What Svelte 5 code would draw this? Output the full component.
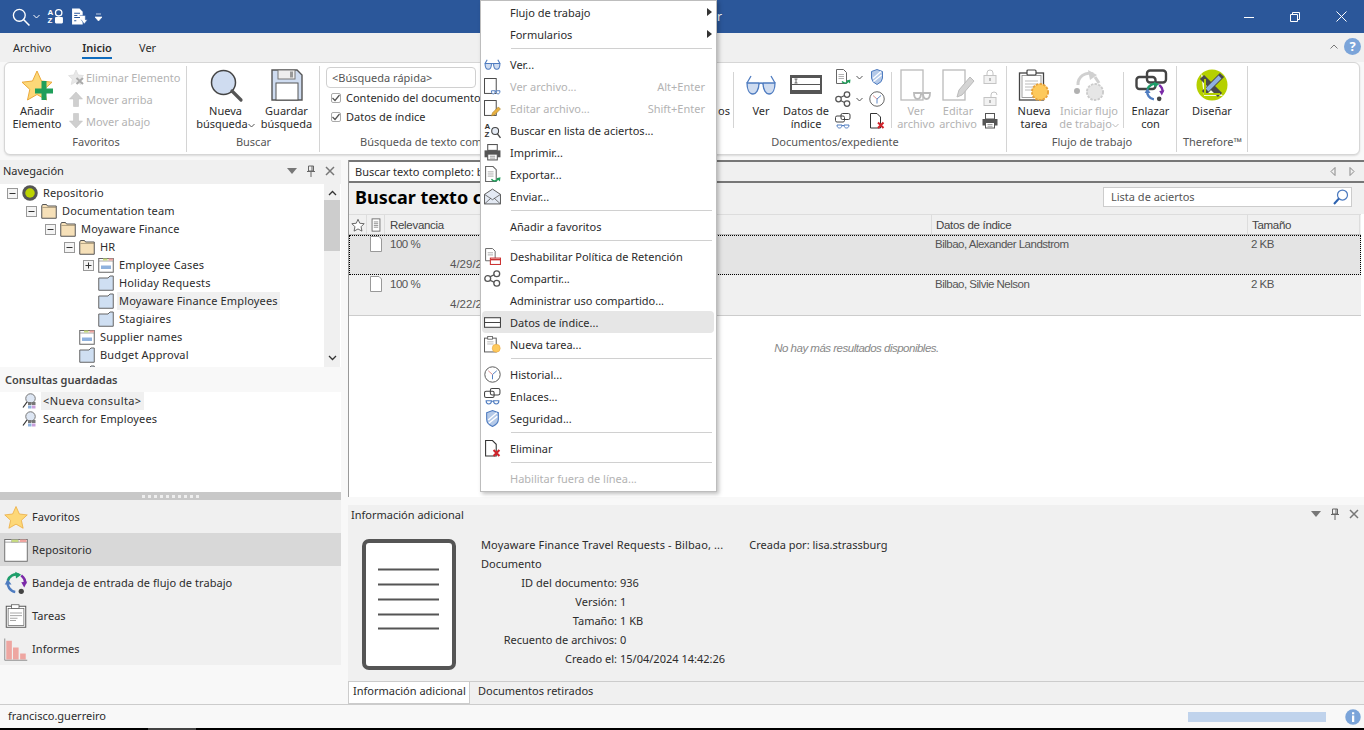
<script>
  // ── Data ───────────────────────────────────────────────────────────────────
  const tree = [
    { level: 0, exp: '-', icon: 'root', text: 'Repositorio' },
    { level: 1, exp: '-', icon: 'folder', text: 'Documentation team' },
    { level: 2, exp: '-', icon: 'folder', text: 'Moyaware Finance' },
    { level: 3, exp: '-', icon: 'folder', text: 'HR' },
    { level: 4, exp: '+', icon: 'category', text: 'Employee Cases' },
    { level: 4, icon: 'queue', text: 'Holiday Requests' },
    { level: 4, icon: 'queue', text: 'Moyaware Finance Employees', active: true },
    { level: 4, icon: 'queue', text: 'Stagiaires' },
    { level: 3, icon: 'category', text: 'Supplier names' },
    { level: 3, icon: 'queue', text: 'Budget Approval' },
    { level: 3, icon: 'queue', text: '' },
  ]

  const menu = [
    { label: 'Flujo de trabajo', arrow: true },
    { label: 'Formularios', arrow: true },
    { sep: true },
    { label: 'Ver...', icon: 'glasses' },
    { label: 'Ver archivo...', icon: 'fileView', off: true, key: 'Alt+Enter' },
    { label: 'Editar archivo...', icon: 'fileEdit', off: true, key: 'Shift+Enter' },
    { label: 'Buscar en lista de aciertos...', icon: 'azSearch' },
    { label: 'Imprimir...', icon: 'printer' },
    { label: 'Exportar...', icon: 'docExport' },
    { label: 'Enviar...', icon: 'mail' },
    { sep: true },
    { label: 'Añadir a favoritos' },
    { sep: true },
    { label: 'Deshabilitar Política de Retención', icon: 'retention' },
    { label: 'Compartir...', icon: 'share' },
    { label: 'Administrar uso compartido...' },
    { label: 'Datos de índice...', icon: 'indexSmall', hover: true },
    { label: 'Nueva tarea...', icon: 'taskSmall' },
    { sep: true },
    { label: 'Historial...', icon: 'clock' },
    { label: 'Enlaces...', icon: 'links' },
    { label: 'Seguridad...', icon: 'shield' },
    { sep: true },
    { label: 'Eliminar', icon: 'docX' },
    { sep: true },
    { label: 'Habilitar fuera de línea...', off: true },
  ]

  const navItems = [
    { label: 'Favoritos', icon: 'starPlain' },
    { label: 'Repositorio', icon: 'repo', active: true },
    { label: 'Bandeja de entrada de flujo de trabajo', icon: 'cycle' },
    { label: 'Tareas', icon: 'clipboard' },
    { label: 'Informes', icon: 'bars' },
  ]

  // the context menu hides the rest of these strings in the screenshot
  const hits = [
    { date: '4/29/2', data: 'Bilbao, Alexander Landstrom', size: '2 KB', selected: true },
    { date: '4/22/2', data: 'Bilbao, Silvie Nelson', size: '2 KB' },
  ]

  const infoRows = [
    ['ID del documento:', '936'],
    ['Versión:', '1'],
    ['Tamaño:', '1 KB'],
    ['Recuento de archivos:', '0'],
    ['Creado el:', '15/04/2024 14:42:26'],
  ]

  const BLUE = '#4f7cc0'
  const FILL = '#cfdcf0'
</script>

{#snippet lens(stroke, fill, w)}
  <path d="M2 14H14C14 21 11 25 8 25C4 25 2 20 2 14ZM18 14H30C30 20 28 25 24 25C21 25 18 21 18 14Z" fill={fill} stroke={stroke} stroke-width={w} />
  <path d="M14 15Q16 13 18 15M2 14L6 7M30 14L26 7" fill="none" stroke={stroke} stroke-width={w} />
{/snippet}

{#snippet smallLens(stroke)}
  <path d="M14 24H21C21 28 20 30 17.500 30S14 28 14 24ZM23 24H30C30 28 29 30 26.500 30S23 28 23 24Z" fill="#fff" stroke={stroke} stroke-width="1.800" />
  <path d="M21 25H23" stroke={stroke} stroke-width="1.800" />
{/snippet}

{#snippet sun(cx, cy, r, fill, stroke)}
  <circle {cx} {cy} r={r} {fill} stroke={stroke} stroke-width="2" stroke-dasharray="2.500 1.200" />
  <circle {cx} {cy} r={r - 1} {fill} />
{/snippet}

{#snippet arcs()}
  <path d="M5 13A12 12 0 0 1 20 5" fill="none" stroke="#1e9e6a" stroke-width="3.500" />
  <path d="M15 1L23 5L16 10Z" fill="#1e9e6a" />
  <path d="M23 6A12 12 0 0 1 28 17" fill="none" stroke="#7b2aa8" stroke-width="3.500" />
  <path d="M23 15L31 14L27 22Z" fill="#7b2aa8" />
  <path d="M5 14A12 12 0 0 0 15 28" fill="none" stroke={BLUE} stroke-width="3.500" />
  <path d="M1 18L5 11L10 18Z" fill={BLUE} />
  <circle cx="23" cy="27" r="3.500" fill="#444" />
{/snippet}

{#snippet ic(name, size = 16)}
  {@const sw = size < 20 ? 2 : 1.300}
  <svg class="ic" width={size} height={size} viewBox="0 0 32 32">
    {#if name === 'star' || name === 'starPlain'}
      <path d="M16 2L20.500 12L31 13.200L23.200 20.400L25.500 31L16 25.500L6.500 31L8.800 20.400L1 13.200L11.500 12Z" fill="#fdd878" stroke="#eba93c" stroke-width="1" />
      {#if name === 'star'}
        <path d="M21.500 13H26.500V20.500H33V25.500H26.500V32H21.500V25.500H15V20.500H21.500Z" fill="#1f9f5a" transform="translate(-1 -1)" />
      {/if}
    {:else if name === 'starOff'}
      <path d="M16 2L20.500 12L31 13.200L23.200 20.400L25.500 31L16 25.500L6.500 31L8.800 20.400L1 13.200L11.500 12Z" fill="#e8e8e8" stroke="#dcdcdc" stroke-width="1.500" />
      <path d="M17 18L30 30M30 18L17 30" stroke="#aaa" stroke-width="4" />
    {:else if name === 'up'}
      <path d="M16 2L29 16H21V31H11V16H3Z" fill="#cfcfcf" stroke="#bdbdbd" />
    {:else if name === 'down'}
      <path d="M16 30L29 16H21V1H11V16H3Z" fill="#cfcfcf" stroke="#bdbdbd" />
    {:else if name === 'lens'}
      <circle cx="13.500" cy="13.500" r="12" fill={FILL} stroke="#444" stroke-width="1.500" />
      <path d="M22 22L31 31" stroke="#555" stroke-width="3.200" stroke-linecap="round" />
    {:else if name === 'floppy'}
      <path d="M1 1H26L31 6V31H1Z" fill={FILL} stroke="#555" stroke-width="1.400" />
      <rect x="7" y="1" width="17" height="9" fill="#eee" stroke="#777" />
      <rect x="19" y="2.500" width="3" height="6" fill="#999" />
      <rect x="5" y="14" width="22" height="17" fill="#fff" stroke="#555" />
    {:else if name === 'glasses'}
      {@render lens(BLUE, FILL, size < 20 ? 2 : 1.300)}
    {:else if name === 'index'}
      <rect x="0" y="6" width="32" height="19" fill="#555" />
      <rect x="2" y="9" width="28" height="6" fill="#fff" />
      <rect x="2" y="16" width="28" height="5" fill="#fff" />
      <path d="M6 10V14M4.500 10H7.500M4.500 14H7.500" stroke="#444" stroke-width=".800" />
    {:else if name === 'indexSmall'}
      <rect x="1" y="7" width="30" height="18" fill="#fff" stroke="#444" stroke-width="2" />
      <path d="M1 16H31" stroke="#444" stroke-width="2" />
    {:else if name === 'docExport'}
      <path d="M3 1H17L23 7V29H3Z" fill="#fff" stroke="#666" stroke-width={sw} />
      <path d="M7 11H18M7 15H18M7 19H18" stroke="#999" stroke-width="1.500" />
      <path d="M14 25Q21 32 27 24" fill="none" stroke="#1f9f5a" stroke-width="3" />
      <path d="M23 23L31 21L30 29Z" fill="#1f9f5a" />
    {:else if name === 'share'}
      <g fill="#fff" stroke="#555" stroke-width="2.500">
        <path d="M9 14L21 8M9 18L21 24" />
        <circle cx="7" cy="16" r="5.500" />
        <circle cx="24" cy="7" r="5.500" />
        <circle cx="24" cy="25" r="5.500" />
      </g>
    {:else if name === 'links'}
      <g fill="none" stroke="#444" stroke-width="2">
        <rect x="1" y="6" width="18" height="12" rx="3" />
        <rect x="12" y="1" width="18" height="12" rx="3" />
      </g>
      <path d="M4 24H14C14 28 12 30 9 30S4 28 4 24ZM18 24H28C28 28 26 30 23 30S18 28 18 24ZM14 25H18" fill="none" stroke={BLUE} stroke-width="2" />
    {:else if name === 'shield'}
      <path d="M5 5L16 1L27 5V18Q27 26 16 31Q5 26 5 18Z" fill="#b4c9e8" stroke={BLUE} stroke-width="2" />
      <path d="M8 19L24 5M9 25L25 12" stroke="#fff" stroke-width="2.500" />
    {:else if name === 'clock'}
      <circle cx="16" cy="16" r="14.500" fill="#fff" stroke="#555" stroke-width="1.800" />
      <path d="M16 16V25M16 16L24 9" stroke={BLUE} stroke-width="1.800" />
      <path d="M16 16L8 9" stroke="#d88" stroke-width="1.800" />
    {:else if name === 'docX'}
      <path d="M3 1H16L23 8V30H3Z" fill="#fff" stroke="#333" stroke-width="2" />
      <path d="M18 19L29 30M29 19L18 30" stroke="#d0232a" stroke-width="4" />
    {:else if name === 'fileViewOff'}
      <rect x="1" y="1" width="22" height="30" fill="#fff" stroke="#bbb" stroke-width="1.300" />
      {@render smallLens('#bbb')}
    {:else if name === 'fileEditOff'}
      <rect x="1" y="1" width="22" height="30" fill="#fff" stroke="#bbb" stroke-width="1.300" />
      <path d="M15 28L17 21L28 8L32 12L20 26Z" fill="#d4d4d4" stroke="#bbb" />
    {:else if name === 'fileView'}
      <rect x="1" y="1" width="22" height="28" fill="#fff" stroke="#444" stroke-width="1.800" />
      {@render smallLens(BLUE)}
    {:else if name === 'fileEdit'}
      <rect x="1" y="1" width="22" height="28" fill="#fff" stroke="#444" stroke-width="1.800" />
      <path d="M14 30L16 24L27 13L31 17L20 28Z" fill="#e8b040" stroke="#a07820" />
    {:else if name === 'lockOff'}
      <rect x="4" y="13" width="24" height="16" fill="#f2f2f2" stroke="#c4c4c4" stroke-width="2" />
      <path d="M10 13V8Q10 2 16 2T22 8V13" fill="none" stroke="#c4c4c4" stroke-width="2" />
      <rect x="14" y="18" width="4" height="6" fill="#bbb" />
    {:else if name === 'unlockOff'}
      <rect x="4" y="13" width="24" height="16" fill="#f2f2f2" stroke="#c4c4c4" stroke-width="2" />
      <path d="M18 13V8Q18 2 24 2T30 8" fill="none" stroke="#c4c4c4" stroke-width="2" />
      <rect x="14" y="18" width="4" height="6" fill="#bbb" />
    {:else if name === 'printer'}
      <rect x="7" y="1" width="18" height="11" fill="#fff" stroke="#555" stroke-width="2" />
      <path d="M1 12H31V25H1Z" fill="#555" />
      <rect x="7" y="19" width="18" height="11" fill="#fff" stroke="#555" stroke-width="2" />
      <path d="M11 23H21M11 26.500H21" stroke="#777" stroke-width="1.400" />
    {:else if name === 'newTask'}
      <rect x="1.500" y="4" width="24" height="27" fill="#fff" stroke="#444" stroke-width="1.300" />
      <rect x="4" y="6.500" width="19" height="22" fill="#fff" stroke="#888" stroke-width=".800" />
      <rect x="9" y="1" width="9" height="5" rx="1" fill="#fff" stroke="#444" stroke-width="1.200" />
      <path d="M7 12H20M7 15H20M7 18H16M7 21H14" stroke="#bbb" stroke-width="1.200" />
      {@render sun(22, 23, 8, '#fdc95c', '#e8a23a')}
    {:else if name === 'taskSmall'}
      <rect x="1" y="4" width="22" height="26" fill="#fff" stroke="#555" stroke-width="1.800" />
      <rect x="7" y="1" width="9" height="5" fill="#fff" stroke="#555" stroke-width="1.500" />
      <path d="M6 11H18M6 15H18" stroke="#aaa" stroke-width="1.500" />
      <circle cx="23" cy="23" r="7.500" fill="#fdc95c" stroke="#e8a23a" />
    {:else if name === 'startOff'}
      <g opacity=".45">
        <path d="M5 16A11 11 0 0 1 20 5" fill="none" stroke="#999" stroke-width="3" />
        <path d="M15 1L24 6L17 11Z" fill="#999" />
        <path d="M22 8L26 14" stroke="#999" stroke-width="3" />
        <circle cx="4" cy="22" r="3" fill="#555" />
        <path d="M13 22L20 17V27Z" fill="#999" />
      </g>
      {@render sun(22, 23, 8, '#e6e6e6', '#ccc')}
    {:else if name === 'linkWith'}
      <g fill="none" stroke="#444" stroke-width="2.400">
        <rect x="1.500" y="8" width="19" height="12" rx="3" />
        <rect x="12" y="1.500" width="19" height="12" rx="3" />
      </g>
      <g transform="translate(9 12) scale(.66)">{@render arcs()}</g>
    {:else if name === 'design'}
      <circle cx="16" cy="16" r="15.500" fill="#b5d000" />
      <path d="M5 5L8 27H27L16 16Z" fill="#fff" opacity=".9" />
      <path d="M6 8L24 26M26 6L8 24" stroke="#4a4a4a" stroke-width="6" />
      <path d="M11 21L24 8" stroke="#8fb0e0" stroke-width="4" />
      <path d="M9 10V25H24" fill="none" stroke="#b5d000" stroke-width="2" />
    {:else if name === 'cycle'}
      {@render arcs()}
    {:else if name === 'repo'}
      <rect x="1" y="2" width="30" height="29" fill="#fff" stroke="#666" stroke-width="1.200" />
      <path d="M1 5.500H31" stroke="#888" />
      <rect x="10" y="2" width="9" height="3.500" fill="#c8dc80" stroke="#999" stroke-width=".500" />
      <rect x="21" y="2" width="9" height="3.500" fill="#efa5a0" />
    {:else if name === 'clipboard'}
      <rect x="3" y="3" width="26" height="28" fill="#fff" stroke="#555" stroke-width="1.300" />
      <rect x="5.500" y="6" width="21" height="22.500" fill="#fff" stroke="#666" stroke-width="1" />
      <rect x="10" y="1" width="10" height="5" fill="#fff" stroke="#555" />
      <path d="M8 12H24M8 15.500H24M8 19H18M8 22H16" stroke="#888" stroke-width="1" />
    {:else if name === 'bars'}
      <rect x="3" y="5" width="7.500" height="25" fill="#eea6a1" />
      <rect x="12" y="14" width="7.500" height="16" fill="#eea6a1" />
      <rect x="21.500" y="22" width="7.500" height="8" fill="#eea6a1" />
      <path d="M1 2V31H31" fill="none" stroke="#888" stroke-width="1.200" />
    {:else if name === 'folder'}
      <path d="M1.500 6L3 3H11L13 6H30.500V30.500H1.500Z" fill="#f6e0b8" stroke="#555" stroke-width="2" />
      <path d="M3 9H30" stroke="#8a7a60" stroke-width="1.200" />
    {:else if name === 'queue'}
      <path d="M1.500 6H20L24 2H30.500V30.500H1.500Z" fill="#cfdff2" stroke="#666" stroke-width="2" />
    {:else if name === 'category'}
      <rect x="1.500" y="3" width="29" height="27.500" fill="#fff" stroke="#666" stroke-width="2" />
      <path d="M1.500 8H31" stroke="#888" stroke-width="1.500" />
      <rect x="10" y="3" width="9" height="4" fill="#c8dc80" />
      <rect x="21" y="3" width="9" height="4" fill="#efa5a0" />
      <rect x="6" y="17" width="20" height="7" fill="#8fb2de" />
    {:else if name === 'root'}
      <circle cx="16" cy="16" r="15.500" fill="#555" />
      <circle cx="16" cy="16" r="9.500" fill="#bcd400" />
    {:else if name === 'query'}
      <circle cx="17" cy="11" r="9.500" fill="#dde6f3" stroke="#777" stroke-width="2" />
      <path d="M10 18L2 29" stroke="#333" stroke-width="2.500" />
      <rect x="12" y="18" width="7" height="6" fill="#777" />
      <rect x="20" y="18" width="7" height="6" fill="#777" />
      <rect x="12" y="25" width="7" height="6" fill="#8fb2de" />
      <rect x="20" y="25" width="7" height="6" fill="#c9a0dc" />
    {:else if name === 'mail'}
      <path d="M1 12L16 2L31 12V30H1Z" fill="#e4eaf4" stroke="#555" stroke-width="1.800" />
      <path d="M1 12L16 22L31 12M1 30L13 19M31 30L19 19" fill="none" stroke="#555" stroke-width="1.500" />
    {:else if name === 'retention'}
      <path d="M3 1H16L21 6V24H3Z" fill="#fff" stroke="#666" stroke-width="1.800" />
      <path d="M7 9H17M7 13H17" stroke="#999" stroke-width="1.500" />
      <rect x="12" y="19" width="19" height="12" fill="#fff" stroke="#c33" stroke-width="2" />
      <path d="M12 22H31" stroke="#c33" stroke-width="2.500" />
    {:else if name === 'azSearch'}
      <text class="az" x="1" y="13">A</text>
      <text class="az" x="1" y="29">Z</text>
      <circle cx="21" cy="17" r="6.500" fill="#e4eaf4" stroke="#444" stroke-width="2" />
      <path d="M25 22L31 30" stroke="#444" stroke-width="2.500" />
    {:else if name === 'azLock'}
      <text class="az white" x="1" y="13">A</text>
      <text class="az white" x="1" y="29">Z</text>
      <circle cx="22" cy="9" r="6" fill="none" stroke="#fff" stroke-width="2.500" />
      <rect x="15" y="17" width="15" height="12" rx="2" fill="#fff" />
    {:else if name === 'qatDoc'}
      <path d="M2 1H16L22 7V31H2Z" fill="#fff" />
      <path d="M6 10H17M6 14H12M6 18H17M6 24H10" stroke="#2b579a" stroke-width="2" />
      <path d="M16 14H27V22H31L25 30L19 22" fill="#fff" stroke="#2b579a" stroke-width="1" />
    {:else if name === 'qatLens'}
      <circle cx="13" cy="13" r="10.500" fill="none" stroke="#fff" stroke-width="2.400" />
      <path d="M20 20L31 31" stroke="#fff" stroke-width="2.800" />
    {:else if name === 'blueLens'}
      <circle cx="19" cy="12" r="10" fill="none" stroke={BLUE} stroke-width="2.500" />
      <path d="M12 19L2 30" stroke="#2c62b0" stroke-width="4" />
    {:else if name === 'starLine'}
      <path d="M16 3L20 12L30 13L23 20L25 30L16 25L7 30L9 20L2 13L12 12Z" fill="#fff" stroke="#555" stroke-width="2" />
    {:else if name === 'docCol'}
      <rect x="7" y="2" width="18" height="28" fill="#fff" stroke="#666" stroke-width="2" />
      <path d="M11 9H21M11 13H21M11 17H21M11 21H21" stroke="#888" stroke-width="2" />
    {:else if name === 'docPlain'}
      <path d="M5 1H22L27 6V31H5Z" fill="#fff" stroke="#999" stroke-width="2" />
    {:else if name === 'info'}
      <circle cx="16" cy="16" r="15.500" fill="#7ba4d9" />
      <rect x="14" y="13" width="4.500" height="13" fill="#fff" />
      <rect x="14" y="6.500" width="4.500" height="4" fill="#fff" />
    {/if}
  </svg>
{/snippet}

{#snippet paneTools()}
  <span class="pane-tools">
    <svg width="10" height="6" viewBox="0 0 10 6"><path d="M0 0H10L5 6Z" fill="#777" /></svg>
    <svg width="10" height="12" viewBox="0 0 10 12"><path d="M2.500 1H7.500V6H2.500ZM1 6.500H9M5 7V12M6 1V6" fill="none" stroke="#666" /></svg>
    <svg width="10" height="10" viewBox="0 0 10 10"><path d="M1 1L9 9M9 1L1 9" stroke="#777" stroke-width="1.500" /></svg>
  </span>
{/snippet}

{#snippet chevron(color = '#555')}
  <svg class="chev" width="7" height="5" viewBox="0 0 7 5"><path d="M.5 1L3.500 4L6.500 1" fill="none" stroke={color} /></svg>
{/snippet}

<div class="app">
  <header class="titlebar">
    <div class="qat">
      {@render ic('qatLens', 18)}
      {@render chevron('#fff')}
      <span class="qat-az">{@render ic('azLock', 17)}</span>
      {@render ic('qatDoc', 17)}
      <svg class="qat-more" width="7" height="8" viewBox="0 0 7 8"><path d="M1 1H6M0 4H7L3.500 8Z" fill="#fff" stroke="#fff" stroke-width=".700" /></svg>
    </div>
    <div class="apptitle">r</div>
    <div class="winctl">
      <span class="winbtn"><svg width="10" height="10" viewBox="0 0 10 10"><path d="M0 5.500H10" stroke="#fff" /></svg></span>
      <span class="winbtn"><svg width="10" height="10" viewBox="0 0 10 10"><path d="M.5 2.500H7.500V9.500H.5ZM2.500 2.500V.5H9.500V7.500H7.500" fill="none" stroke="#fff" /></svg></span>
      <span class="winbtn"><svg width="11" height="11" viewBox="0 0 11 11"><path d="M.5 .5L10.500 10.500M10.500 .5L.5 10.500" stroke="#fff" /></svg></span>
    </div>
  </header>

  <nav class="tabs">
    <span class="tab t-archivo">Archivo</span>
    <span class="tab t-inicio">Inicio</span>
    <span class="tab t-ver">Ver</span>
    <span class="tabs-right">
      <svg width="8" height="5" viewBox="0 0 8 5"><path d="M.5 4.500L4 1L7.500 4.500" fill="none" stroke="#777" /></svg>
      <span class="help">?</span>
    </span>
  </nav>

  <section class="ribbon">
    <div class="group g-fav">
      <div class="gbody">
        <div class="big w-add">{@render ic('star', 32)}<span>Añadir<br />Elemento</span></div>
        <div class="smalls">
          <div class="small off">{@render ic('starOff')}<span>Eliminar Elemento</span></div>
          <div class="small off">{@render ic('up')}<span>Mover arriba</span></div>
          <div class="small off">{@render ic('down')}<span>Mover abajo</span></div>
        </div>
      </div>
      <div class="glabel">Favoritos</div>
    </div>

    <div class="group g-search">
      <div class="gbody">
        <div class="big w-61">{@render ic('lens', 32)}<span>Nueva<br />búsqueda{@render chevron()}</span></div>
        <div class="big w-61">{@render ic('floppy', 32)}<span>Guardar<br />búsqueda</span></div>
      </div>
      <div class="glabel">Buscar</div>
    </div>

    <div class="group g-full">
      <div class="gbody col">
        <div class="quick">&lt;Búsqueda rápida&gt;</div>
        <label class="chk"><span class="box"><svg width="8" height="8" viewBox="0 0 8 8"><path d="M.5 4L3 6.500L7.500 1" fill="none" stroke="#555" stroke-width="1.200" /></svg></span>Contenido del documento</label>
        <label class="chk"><span class="box"><svg width="8" height="8" viewBox="0 0 8 8"><path d="M.5 4L3 6.500L7.500 1" fill="none" stroke="#555" stroke-width="1.200" /></svg></span>Datos de índice</label>
      </div>
      <div class="glabel">Búsqueda de texto com</div>
    </div>

    <div class="group g-hidden"></div>

    <div class="group g-docs">
      <div class="gbody">
        <div class="big w-hid inner-sep"><span class="no-icon">os</span></div>
        <div class="big w-ver">{@render ic('glasses', 32)}<span>Ver</span></div>
        <div class="big w-datos">{@render ic('index', 32)}<span>Datos de<br />índice</span></div>
        <div class="smalls s-doc1">
          <div class="small">{@render ic('docExport')}{@render chevron()}</div>
          <div class="small">{@render ic('share')}{@render chevron()}</div>
          <div class="small">{@render ic('links')}</div>
        </div>
        <div class="smalls s-doc2">
          <div class="small">{@render ic('shield')}</div>
          <div class="small">{@render ic('clock')}</div>
          <div class="small">{@render ic('docX')}</div>
        </div>
        <div class="inner-line"></div>
        <div class="big w-42 off">{@render ic('fileViewOff', 32)}<span>Ver<br />archivo</span></div>
        <div class="big w-42 off">{@render ic('fileEditOff', 32)}<span>Editar<br />archivo</span></div>
        <div class="smalls s-doc3">
          <div class="small">{@render ic('lockOff')}</div>
          <div class="small">{@render ic('unlockOff')}</div>
          <div class="small">{@render ic('printer')}</div>
        </div>
      </div>
      <div class="glabel">Documentos/expediente</div>
    </div>

    <div class="group g-flow">
      <div class="gbody">
        <div class="big w-tarea">{@render ic('newTask', 32)}<span>Nueva<br />tarea</span></div>
        <div class="big w-iniciar off">{@render ic('startOff', 32)}<span>Iniciar flujo<br />de trabajo{@render chevron('#bbb')}</span></div>
        <div class="inner-line short"></div>
        <div class="big w-enlazar">{@render ic('linkWith', 32)}<span>Enlazar<br />con</span></div>
      </div>
      <div class="glabel">Flujo de trabajo</div>
    </div>

    <div class="group g-there">
      <div class="gbody">
        <div class="big w-dis">{@render ic('design', 32)}<span>Diseñar</span></div>
      </div>
      <div class="glabel">Therefore™</div>
    </div>
  </section>

  <main class="main">
    <aside class="left">
      <div class="panehead"><span>Navegación</span>{@render paneTools()}</div>
      <div class="treewrap">
        <div class="tree">
          {#each tree as row}
            <div class="node" style="padding-left:{7 + row.level * 19}px">
              <span class="exp">
                {#if row.exp}
                  <svg width="11" height="11" viewBox="0 0 11 11">
                    <rect x=".5" y=".5" width="10" height="10" fill="#f4f4f4" stroke="#999" />
                    <path d="M2.500 5.500H8.500" stroke="#333" />
                    {#if row.exp === '+'}<path d="M5.500 2.500V8.500" stroke="#333" />{/if}
                  </svg>
                {/if}
              </span>
              {@render ic(row.icon)}
              <span class="nodetext" class:active={row.active}>{row.text}</span>
            </div>
          {/each}
        </div>
        <div class="vscroll">
          <svg width="9" height="6" viewBox="0 0 9 6"><path d="M1 5L4.500 1.500L8 5" fill="none" stroke="#333" stroke-width="1.300" /></svg>
          <div class="thumb"></div>
          <svg class="sdown" width="9" height="6" viewBox="0 0 9 6"><path d="M1 1L4.500 4.500L8 1" fill="none" stroke="#333" stroke-width="1.300" /></svg>
        </div>
      </div>
      <div class="savedhead">Consultas guardadas</div>
      <div class="saved">
        <div class="node q">{@render ic('query')}<span class="nodetext active">&lt;Nueva consulta&gt;</span></div>
        <div class="node q">{@render ic('query')}<span class="nodetext">Search for Employees</span></div>
      </div>
      <div class="splitter"><i></i><i></i><i></i><i></i><i></i><i></i><i></i><i></i><i></i><i></i></div>
      <div class="navlist">
        {#each navItems as item}
          <div class="navitem" class:sel={item.active}>{@render ic(item.icon, 24)}<span>{item.label}</span></div>
        {/each}
      </div>
    </aside>

    <div class="right">
      <section class="results">
        <div class="doctabs">
          <span class="doctab">Buscar texto completo: b</span>
          <span class="docarrows">
            <svg width="6" height="9" viewBox="0 0 6 9"><path d="M5 .5L1 4.500L5 8.500Z" fill="none" stroke="#888" /></svg>
            <svg width="6" height="9" viewBox="0 0 6 9"><path d="M1 .5L5 4.500L1 8.500Z" fill="none" stroke="#888" /></svg>
          </span>
        </div>
        <div class="reshead">
          <h1>Buscar texto c</h1>
          <div class="filter"><span>Lista de aciertos</span>{@render ic('blueLens')}</div>
        </div>
        <div class="cols">
          <span class="c-star">{@render ic('starLine', 14)}</span>
          <span class="c-doc">{@render ic('docCol', 14)}</span>
          <span class="c-rel">Relevancia</span>
          <span class="c-data">Datos de índice</span>
          <span class="c-size">Tamaño</span>
        </div>
        {#each hits as hit}
          <div class="hit" class:selected={hit.selected}>
            <div class="h-icon">{@render ic('docPlain')}</div>
            <div class="h-rel">100 %<div class="h-date">{hit.date}</div></div>
            <div class="h-data">{hit.data}</div>
            <div class="h-size">{hit.size}</div>
          </div>
        {/each}
        <div class="nomore">No hay más resultados disponibles.</div>
      </section>

      <section class="info">
        <div class="panehead info-head"><span>Información adicional</span>{@render paneTools()}</div>
        <div class="info-body">
          <svg class="bigdoc" width="94" height="131" viewBox="0 0 94 131">
            <rect x="2" y="2" width="90" height="127" rx="5" fill="#fff" stroke="#555" stroke-width="4" />
            <path d="M16 30.500H77M16 45.500H77M16 60.500H77M16 75.500H77M16 89.500H77" stroke="#555" stroke-width="2" />
          </svg>
          <div class="meta">
            <div class="meta-top"><span>Moyaware Finance Travel Requests - Bilbao, ...</span><span class="creator">Creada por: lisa.strassburg</span></div>
            <div class="meta-line">Documento</div>
            {#each infoRows as [k, v]}
              <div class="meta-row"><span class="k">{k}</span><span>{v}</span></div>
            {/each}
          </div>
        </div>
        <div class="infotabs">
          <span class="itab on">Información adicional</span>
          <span class="itab">Documentos retirados</span>
        </div>
      </section>
    </div>
  </main>

  <footer class="status">
    <span class="user">francisco.guerreiro</span>
    <span class="progress"></span>
    {@render ic('info')}
  </footer>
  <div class="strip"><i></i></div>

  <!-- context menu floats over the ribbon and the hit list -->
  <div class="menu">
    {#each menu as m}
      {#if m.sep}
        <div class="msep"></div>
      {:else}
        <div class="mitem" class:off={m.off} class:hover={m.hover}>
          <span class="micon">{#if m.icon}{@render ic(m.icon, 17)}{/if}</span>
          <span class="mlabel">{m.label}</span>
          {#if m.key}<span class="mkey">{m.key}</span>{/if}
          {#if m.arrow}<svg class="marrow" width="5" height="8" viewBox="0 0 5 8"><path d="M0 0L5 4L0 8Z" fill="#333" /></svg>{/if}
        </div>
      {/if}
    {/each}
  </div>
</div>

<style>
  :global(*, *::before, *::after) { box-sizing: border-box; margin: 0; padding: 0; }
  :global(body) {
    background: #f8f8f8;
    font-family: 'Noto Sans', 'Open Sans', sans-serif;
    font-size: 11px;
    color: #2c2c2c;
    overflow: hidden;
  }

  .app { position: relative; width: 1364px; height: 730px; overflow: hidden; background: #f8f8f8; }
  .ic { display: block; flex-shrink: 0; overflow: visible; }
  .az { font: 700 15px 'Liberation Sans', sans-serif; fill: #333; }
  .az.white { fill: #fff; }

  /* ── Title bar ─────────────────────────────── */
  .titlebar { height: 33px; background: #2b579a; display: flex; align-items: center; color: #fff; }
  .qat { width: 110px; padding-left: 12px; display: flex; align-items: center; gap: 3px; flex-shrink: 0; }
  .qat-az { margin-left: 4px; margin-right: 4px; }
  .qat-more { margin-left: 4px; }
  .apptitle { width: 612px; text-align: right; font-size: 12px; flex-shrink: 0; }
  .winctl { margin-left: auto; display: flex; }
  .winbtn { width: 46px; height: 33px; display: flex; align-items: center; justify-content: center; }

  /* ── Tabs ──────────────────────────────────── */
  .tabs { height: 29px; background: #f0f0f0; display: flex; align-items: flex-start; position: relative; }
  .tab { height: 26px; padding-top: 7px; line-height: 16px; }
  .t-archivo { margin-left: 13px; width: 69px; }
  .t-inicio { width: 30px; text-align: center; font-weight: 600; border-bottom: 2px solid #0f6cbd; margin-right: 27px; }
  .tabs-right { margin-left: auto; display: flex; align-items: center; gap: 6px; padding: 5px 2px 0 0; }
  .help {
    width: 17px; height: 17px; border-radius: 50%; background: #7ba4d9; color: #fff;
    font-weight: 700; font-size: 13px; line-height: 17px; text-align: center; margin-right: 1px;
  }

  /* ── Ribbon ────────────────────────────────── */
  .ribbon {
    height: 93px; margin: 0 4px 5px; background: #fff; border: 1px solid #d6d6d6; border-radius: 6px;
    display: flex; box-shadow: 0 1px 2px rgba(0,0,0,0.12);
  }
  .group { display: flex; flex-direction: column; position: relative; flex-shrink: 0; padding-top: 3px; }
  .group::after { content: ''; position: absolute; right: 0; top: 3px; bottom: 2px; width: 1px; background: #d4d4d4; }
  .gbody { flex: 1; display: flex; min-height: 0; }
  .gbody.col { flex-direction: column; }
  .glabel { height: 20px; text-align: center; color: #555; line-height: 15px; white-space: nowrap; overflow: hidden; }
  .g-fav { width: 182px; }
  .g-search { width: 133px; padding-left: 8px; }
  .g-search .glabel { margin-left: -8px; }
  .g-full { width: 232px; padding-left: 6px; }
  .g-full .glabel { text-align: left; padding-left: 34px; }
  .g-hidden { width: 111px; }
  .g-docs { width: 344px; }
  .g-flow { width: 170px; }
  .g-there { width: 71px; }

  .big {
    display: flex; flex-direction: column; align-items: center; text-align: center;
    line-height: 13px; white-space: nowrap; flex-shrink: 0;
  }
  .big .ic { height: 32px; margin: 3px 0 3px; }
  .big.off, .small.off { color: #b3b3b3; }
  .w-add { width: 62px; margin-left: 1px; }
  .w-61 { width: 61px; }
  .w-hid { width: 71px; align-items: flex-end; padding-right: 3px; }
  .no-icon { padding-top: 38px; }
  .inner-sep { border-right: 1px solid #d4d4d4; margin: 6px 0 23px; height: 56px; }
  .inner-sep .no-icon { padding-top: 32px; }
  .w-ver { width: 48px; margin-left: 3px; }
  .w-datos { width: 44px; margin-left: -1px; }
  .w-42 { width: 42px; }
  .w-tarea { width: 44px; margin-left: 5px; }
  .w-iniciar { width: 66px; }
  .w-enlazar { width: 51px; margin-left: 1px; }
  .w-dis { width: 70px; }
  .inner-line { width: 1px; height: 56px; background: #d4d4d4; margin: 6px 3px 0 6px; }
  .inner-line.short { margin: 6px 0 0 1px; }

  .smalls { display: flex; flex-direction: column; flex-shrink: 0; }
  .small { height: 22px; display: flex; align-items: center; gap: 2px; white-space: nowrap; }
  .s-doc1 { width: 34px; margin-left: 7px; }
  .s-doc1 .small { gap: 5px; }
  .s-doc2 { width: 16px; }
  .s-doc3 { margin-left: 3px; }

  .quick {
    width: 150px; height: 21px; margin-top: 1px; background: #fff; border: 1px solid #d0d0d0; border-radius: 4px;
    padding-left: 5px; line-height: 19px; color: #555;
  }
  .chk { display: flex; align-items: center; gap: 5px; height: 19px; white-space: nowrap; margin-left: 5px; }
  .box {
    width: 10px; height: 10px; border: 1px solid #aaa; border-radius: 2px; background: #fff;
    display: flex; align-items: center; justify-content: center;
  }

  /* ── Main ──────────────────────────────────── */
  .main { height: 544px; display: flex; }
  .left { width: 341px; flex-shrink: 0; display: flex; flex-direction: column; }
  .panehead { height: 24px; background: #f0f0f0; display: flex; align-items: center; justify-content: space-between; padding: 0 6px 3px 3px; flex-shrink: 0; }
  .pane-tools { display: flex; align-items: center; gap: 9px; }

  .treewrap { height: 183px; background: #fff; display: flex; overflow: hidden; }
  .tree { width: 324px; overflow: hidden; }
  .node { height: 18px; display: flex; align-items: center; white-space: nowrap; }
  .exp { width: 15px; display: flex; flex-shrink: 0; }
  .nodetext { margin-left: 3px; padding: 0 2px; line-height: 18px; letter-spacing: .15px; }
  .nodetext.active { background: #f0f0f0; }
  .q .nodetext.active { letter-spacing: .4px; }
  .vscroll { width: 16px; background: #f0f0f0; display: flex; flex-direction: column; align-items: center; padding-top: 6px; }
  .thumb { width: 16px; height: 51px; background: #cdcdcd; margin-top: 4px; }
  .sdown { margin-top: auto; margin-bottom: 6px; }

  .savedhead { height: 25px; background: #f8f8f8; padding-left: 5px; line-height: 25px; font-weight: 600; color: #444; }
  .saved { height: 100px; background: #fff; }
  .q { padding-left: 22px; }
  .splitter { height: 8px; background: #c8c8c8; display: flex; justify-content: center; align-items: center; gap: 3px; }
  .splitter i { width: 3px; height: 3px; background: #eee; }
  .navlist { background: #f0f0f0; }
  .navitem { height: 33px; display: flex; align-items: center; gap: 4px; padding-left: 4px; letter-spacing: .05px; }
  .navitem.sel { background: #d8d8d8; }

  .right { flex: 1; margin-left: 7px; display: flex; flex-direction: column; min-width: 0; }
  .results { height: 337px; background: #fff; border-left: 1px solid #999; flex-shrink: 0; }
  .doctabs {
    height: 23px; background: #f0f0f0; border-top: 2px solid #777; border-bottom: 2px solid #777;
    display: flex; justify-content: space-between;
  }
  .doctab { width: 131px; margin-left: 1px; background: #fff; padding-left: 5px; line-height: 19px; white-space: nowrap; }
  .docarrows { display: flex; gap: 13px; align-items: center; padding-right: 9px; }
  .reshead { height: 31px; background: #f0f0f0; display: flex; align-items: center; justify-content: space-between; padding: 0 12px 3px 6px; }
  h1 { font: 700 18px 'Noto Sans', sans-serif; color: #000; white-space: nowrap; }
  .filter {
    width: 249px; height: 20px; background: #fff; border: 1px solid #ccc; display: flex; align-items: center;
    justify-content: space-between; padding: 0 2px 0 7px; color: #555;
  }
  .filter span { padding-bottom: 2px; }
  .cols {
    height: 21px; background: #f0f0f0; border-top: 1px solid #ddd; border-bottom: 1px solid #bbb; display: grid;
    grid-template-columns: 18px 18px 547px 316px 112px; align-items: center;
    font-family: 'Liberation Sans', sans-serif; font-size: 11.5px; letter-spacing: -.3px; width: 1012px; color: #444;
  }
  .cols > span { height: 100%; display: flex; align-items: center; border-right: 1px solid #ddd; padding-left: 2px; }
  .cols > .c-rel { padding-left: 5px; }
  .cols > .c-data, .cols > .c-size { padding-left: 4px; }
  .hit {
    height: 40px; background: #f0f0f0; display: grid; width: 1012px;
    grid-template-columns: 36px 547px 316px 112px; border-bottom: 1px solid #ccc;
    font-family: 'Liberation Sans', sans-serif; font-size: 11.5px; letter-spacing: -.5px; color: #555;
    padding-top: 3px; overflow: hidden;
  }
  .hit.selected { background: #e4e4e4; outline: 1px dotted #000; outline-offset: -1px; border-bottom: none; }
  .hit + .hit { height: 41px; }
  .h-icon { padding-left: 19px; margin-top: -2px; }
  .h-rel { padding-left: 5px; white-space: nowrap; }
  .h-date { margin: 8px 0 0 60px; letter-spacing: 0; }
  .h-data, .h-size { padding-left: 3px; }
  .nomore {
    text-align: center; color: #888; font-style: italic; padding-top: 26px;
    font-family: 'Liberation Sans', sans-serif; font-size: 11.5px; letter-spacing: -.5px;
  }

  .info { margin-top: 8px; flex: 1; background: #f0f0f0; display: flex; flex-direction: column; }
  .info-head { padding-right: 5px; height: 21px; padding-bottom: 3px; }
  .info-body { flex: 1; display: flex; padding: 13px 0 0 14px; }
  .meta { margin-left: 25px; margin-top: -4px; }
  .meta-top { display: flex; height: 19px; align-items: center; white-space: nowrap; letter-spacing: .13px; }
  .creator { margin-left: 26px; letter-spacing: 0; }
  .meta-line { height: 19px; line-height: 19px; }
  .meta-row { height: 19px; line-height: 19px; display: grid; grid-template-columns: 136px auto; column-gap: 3px; }
  .k { text-align: right; }
  .infotabs { height: 23px; border-top: 1px solid #ccc; display: flex; align-items: flex-start; }
  .itab { height: 22px; padding: 0 4px; line-height: 18px; white-space: nowrap; }
  .itab.on { background: #fff; border: 1px solid #ccc; border-top: none; width: 122px; margin-right: 4px; }

  /* ── Status ────────────────────────────────── */
  .status { height: 24px; background: #f8f8f8; border-top: 1px solid #ccc; display: flex; align-items: center; padding: 0 3px 0 8px; }
  .user { padding-bottom: 2px; }
  .progress { width: 138px; height: 10px; background: #c0d3ec; margin-left: auto; margin-right: 19px; }
  .strip { height: 2px; background: #000; }
  .strip i { display: block; width: 48px; height: 2px; margin-left: 148px; background: #444; }

  /* ── Context menu ──────────────────────────── */
  .menu {
    position: absolute; left: 480px; top: 0; width: 237px; height: 492px; background: #fff;
    border: 1px solid #bdbdbd; padding: 0 2px 1px 1px; box-shadow: 2px 2px 4px rgba(0,0,0,0.25);
  }
  .mitem { height: 22px; display: flex; align-items: center; border-radius: 4px; position: relative; white-space: nowrap; }
  .mitem.hover { background: #e6e6e6; }
  .mitem.off { color: #b3b3b3; }
  .micon { width: 28px; padding-left: 2px; flex-shrink: 0; }
  .mkey { position: absolute; right: 9px; }
  .marrow { position: absolute; right: 2px; }
  .msep { height: 8px; position: relative; }
  .msep::after { content: ''; position: absolute; left: 29px; right: 2px; top: 3px; height: 1px; background: #d0d0d0; }
</style>
